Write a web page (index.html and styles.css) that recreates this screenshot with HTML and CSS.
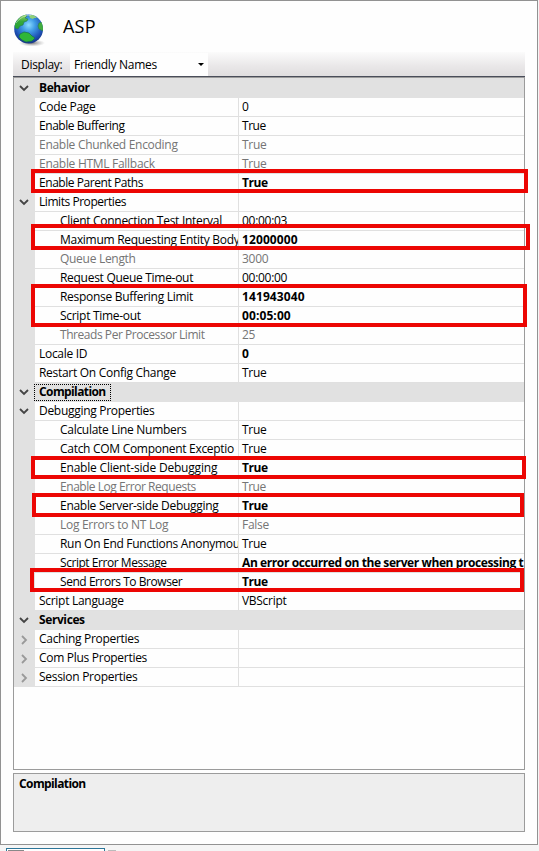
FILE: index.html
```html
<!DOCTYPE html>
<html lang="en">
<head>
<meta charset="utf-8">
<title>ASP</title>
<link rel="stylesheet" href="styles.css">
</head>
<body>
<main class="window">
  <header class="title">
    <svg class="globe" width="32" height="34" viewBox="0 0 32 34">
      <defs>
        <radialGradient id="sea" cx=".5" cy=".36" r=".66"><stop offset="0" stop-color="#8bdcff"/><stop offset=".35" stop-color="#3f9be4"/><stop offset=".75" stop-color="#1d50b4"/><stop offset="1" stop-color="#143080"/></radialGradient>
        <linearGradient id="land" x1="0" y1="0" x2="0" y2="1"><stop offset="0" stop-color="#a5dc6b"/><stop offset=".5" stop-color="#36a83c"/><stop offset="1" stop-color="#23a32f"/></linearGradient>
        <radialGradient id="shade"><stop offset="0" stop-color="#555" stop-opacity=".8"/><stop offset="1" stop-color="#999" stop-opacity="0"/></radialGradient>
        <clipPath id="disc"><circle cx="14.6" cy="15" r="14.4"/></clipPath>
      </defs>
      <ellipse cx="18" cy="29" rx="13" ry="3.6" fill="url(#shade)"/>
      <circle cx="14.6" cy="15" r="14.4" fill="url(#sea)"/>
      <g clip-path="url(#disc)">
        <path d="M1 14 0 7 7 1l5-1 1 2-2 2 3 1-1 2-3 1-1 3-3 1-2 3-3-1z" fill="url(#land)" stroke="#287b58" stroke-width=".6"/>
        <path d="M15 1l5 0 3 3-3 0-1 1-3-1z" fill="#8fcf79"/>
        <path d="M25 9l3-1 2 4-1 5-4-2-1-3z" fill="#42ad3d" stroke="#287b58" stroke-width=".6"/>
        <path d="M6 20l4-2 5 1 3 3 3 2-3 3-6 1-4-2-3-3z" fill="#2fb638" stroke="#176d4b" stroke-width=".7"/>
        <path d="M2 9q6-8 15-8" fill="none" stroke="#fff" stroke-opacity=".4" stroke-width="1"/>
      </g>
    </svg>
    <h1>ASP</h1>
  </header>
  <div class="toolbar">
    <span class="display">Display:</span>
    <div class="select"><span>Friendly Names</span><i class="caret"></i></div>
  </div>
  <section class="grid">
    <div class="row head"><svg class="chev" viewBox="0 0 10 7"><path d="M1 1l4 4 4-4"/></svg><b>Behavior</b></div>
    <div class="row"><span class="name">Code Page</span><span class="val">0</span></div>
    <div class="row tight"><span class="name">Enable Buffering</span><span class="val">True</span></div>
    <div class="row dim"><span class="name">Enable Chunked Encoding</span><span class="val">True</span></div>
    <div class="row dim"><span class="name">Enable HTML Fallback</span><span class="val">True</span></div>
    <div class="row set tight"><span class="name">Enable Parent Paths</span><span class="val">True</span></div>
    <div class="row"><svg class="chev" viewBox="0 0 10 7"><path d="M1 1l4 4 4-4"/></svg><span class="name tight">Limits Properties</span><span class="val"></span></div>
    <div class="row sub"><span class="name">Client Connection Test Interval</span><span class="val">00:00:03</span></div>
    <div class="row sub set num"><span class="name">Maximum Requesting Entity Body</span><span class="val">12000000</span></div>
    <div class="row sub dim"><span class="name">Queue Length</span><span class="val">3000</span></div>
    <div class="row sub"><span class="name">Request Queue Time-out</span><span class="val">00:00:00</span></div>
    <div class="row sub set num"><span class="name">Response Buffering Limit</span><span class="val">141943040</span></div>
    <div class="row sub set num"><span class="name">Script Time-out</span><span class="val">00:05:00</span></div>
    <div class="row sub dim tight"><span class="name">Threads Per Processor Limit</span><span class="val">25</span></div>
    <div class="row set"><span class="name">Locale ID</span><span class="val">0</span></div>
    <div class="row"><span class="name">Restart On Config Change</span><span class="val">True</span></div>
    <div class="row head"><svg class="chev" viewBox="0 0 10 7"><path d="M1 1l4 4 4-4"/></svg><b class="focus">Compilation</b></div>
    <div class="row"><svg class="chev" viewBox="0 0 10 7"><path d="M1 1l4 4 4-4"/></svg><span class="name">Debugging Properties</span><span class="val"></span></div>
    <div class="row sub"><span class="name">Calculate Line Numbers</span><span class="val">True</span></div>
    <div class="row sub"><span class="name">Catch COM Component Exceptio</span><span class="val">True</span></div>
    <div class="row sub set loose"><span class="name">Enable Client-side Debugging</span><span class="val">True</span></div>
    <div class="row sub dim tight"><span class="name">Enable Log Error Requests</span><span class="val">True</span></div>
    <div class="row sub set"><span class="name">Enable Server-side Debugging</span><span class="val">True</span></div>
    <div class="row sub dim"><span class="name">Log Errors to NT Log</span><span class="val">False</span></div>
    <div class="row sub"><span class="name">Run On End Functions Anonymou</span><span class="val">True</span></div>
    <div class="row sub set tight"><span class="name">Script Error Message</span><span class="val">An error occurred on the server when processing t</span></div>
    <div class="row sub set tight"><span class="name">Send Errors To Browser</span><span class="val">True</span></div>
    <div class="row"><span class="name">Script Language</span><span class="val">VBScript</span></div>
    <div class="row head"><svg class="chev" viewBox="0 0 10 7"><path d="M1 1l4 4 4-4"/></svg><b>Services</b></div>
    <div class="row"><svg class="chev shut" viewBox="0 0 7 10"><path d="M1 1l4 4-4 4"/></svg><span class="name">Caching Properties</span><span class="val"></span></div>
    <div class="row"><svg class="chev shut" viewBox="0 0 7 10"><path d="M1 1l4 4-4 4"/></svg><span class="name">Com Plus Properties</span><span class="val"></span></div>
    <div class="row"><svg class="chev shut" viewBox="0 0 7 10"><path d="M1 1l4 4-4 4"/></svg><span class="name">Session Properties</span><span class="val"></span></div>
  </section>
  <section class="help"><b>Compilation</b></section>
</main>
<footer class="views"><span class="tab"><i></i></span><i class="next"></i></footer>
<div class="mark m1"></div>
<div class="mark m2"></div>
<div class="mark m3"></div>
<div class="mark m4"></div>
<div class="mark m5"></div>
<div class="mark m6"></div>
</body>
</html>
```
FILE: styles.css
```css
* { box-sizing: border-box; }
html, body { height: 851px; overflow: hidden; }
body {
  margin: 0;
  position: relative;
  background: #f5f5f5;
  color: #000;
  font: 12px/17px "Open Sans", "Noto Sans", sans-serif;
  letter-spacing: -0.29px;
}
.window {
  width: 538px;
  height: 845px;
  padding: 0 12px;
  border: 1px solid #929292;
  background: #fefefe;
}
.title { display: flex; height: 51px; padding-top: 12px; }
.globe { display: block; margin: 1px 0 0 1px; }
h1 { margin: 0 0 0 17px; font-size: 18px; font-weight: 400; line-height: 26px; letter-spacing: 0.2px; }
.toolbar {
  display: flex;
  height: 25px;
  border-bottom: 1px solid #4a4e5a;
  background: linear-gradient(#fbfbfb, #e9e7e8 60%, #e0dedf);
}
.display { width: 57px; padding: 3px 0 0 8px; line-height: 19px; }
.select {
  display: flex;
  align-items: center;
  justify-content: space-between;
  width: 138px;
  height: 23px;
  margin-top: 1px;
  padding: 0 4px 0 4px;
  background: #fefefe;
}
.caret { border: 3px solid transparent; border-top-color: #000; border-bottom: 0; }
.grid {
  height: 693px;
  padding-top: 1px;
  border: 1px solid #9b9b9b;
  background: linear-gradient(#e1e1e1, #e1e1e1) 0 0 / 100% 1px no-repeat #fefefe;
}
.row {
  display: grid;
  grid-template-columns: 21px 203px minmax(0, 1fr);
  height: 19px;
  background: linear-gradient(#e1e1e1, #e1e1e1) 0 0 / 21px 100% no-repeat;
}
.name, .val {
  grid-row: 1;
  height: 19px;
  overflow: hidden;
  white-space: nowrap;
  border-bottom: 1px solid #e0e0e0;
}
.name { grid-column: 2; padding-left: 4px; }
.sub .name { padding-left: 25px; }
.val { grid-column: 3; padding-left: 3px; border-left: 1px solid #e0e0e0; }
.dim { color: #757575; }
.tight { letter-spacing: -0.45px; }
.loose { letter-spacing: -0.2px; }
.set .val, b { font-weight: 700; letter-spacing: -0.4px; }
.num .val { letter-spacing: 0.1px; }
.head { background: #e1e1e1; }
.head b { grid-column: 2; justify-self: start; padding-left: 4px; }
.head .focus { height: 17px; margin: 1px 0 0 -1px; padding: 0 4px; line-height: 13px; letter-spacing: -0.6px; border: 1px dotted #000; }
.chev { grid-column: 1; grid-row: 1; width: 10px; height: 7px; margin: 6px 0 0 5px; fill: none; stroke: #444; stroke-width: 1.8; }
.shut { width: 7px; height: 10px; margin: 5px 0 0 7px; stroke: #999; }
.help { height: 59px; margin-top: 3px; padding: 1px 5px; border: 1px solid #9b9b9b; background: #eee; }
.help b { letter-spacing: -0.6px; }
.views { display: flex; height: 6px; padding: 3px 0 0 6px; }
.tab { width: 99px; height: 3px; padding: 1px; border: 1px solid #2d7699; border-bottom: 0; background: #fff; }
.tab i { display: block; width: 16px; height: 1px; background: #888; }
.next { width: 8px; height: 1px; margin: 2px 0 0 3px; background: #bbb; }
.mark { position: absolute; border: 4px solid #ec0603; }
.m1 { left: 31px; top: 169px; width: 497px; height: 24px; }
.m2 { left: 31px; top: 224px; width: 499px; height: 26px; }
.m3 { left: 31px; top: 284px; width: 496px; height: 43px; }
.m4 { left: 31px; top: 456px; width: 495px; height: 23px; }
.m5 { left: 32px; top: 493px; width: 492px; height: 24px; }
.m6 { left: 30px; top: 568px; width: 494px; height: 24px; }
```
